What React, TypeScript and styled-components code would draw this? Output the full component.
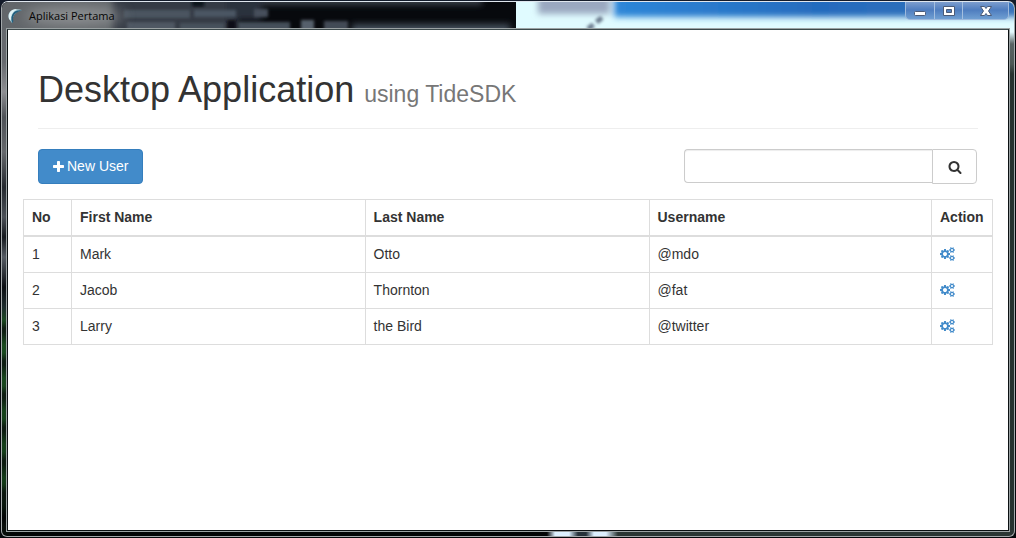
import React from "react";
import styled, { createGlobalStyle } from "styled-components";

const GlobalStyle = createGlobalStyle`
  *, *::before, *::after { box-sizing: border-box; }
  body {
    margin: 0;
    background: #05070b;
    color: #333;
    font: 14px/19px "Liberation Sans", Arial, sans-serif;
  }
`;

const Desktop = styled.div`
  display: flex;
  min-height: 100vh;
  padding: 1px;
  background: linear-gradient(#141c2b, #05070b 40px);
`;

const Frame = styled.div`
  position: relative;
  flex: 1;
  display: flex;
  flex-direction: column;
  padding: 0 5px 5px;
  border: 1px solid #a3a8aa;
  border-top-color: #dfe6ee;
  border-radius: 7px 7px 6px 6px;
  overflow: hidden;
  background:
    linear-gradient(to right,
      transparent 545px, #dcf0ff 553px 567px, #26323a 576px 584px,
      #dcf0ff 592px 604px, #2b3634 616px) bottom / 100% 6px no-repeat,
    linear-gradient(#e4fbff 0 30px, #596464 42px, #4c5855 62px, #26322f 72px) right / 8px 100% no-repeat,
    repeating-linear-gradient(transparent 0 8px, #0b120ecc 16px 20px, transparent 33px) left 310px / 8px 100% no-repeat,
    linear-gradient(#66696e 0 60px, #8d8e92 90px, #4e5257 115px, #65686c 150px,
      #25292f 185px, #4b5057 215px, #15191e 235px, #555b63 255px, #0b0e12 285px,
      #1d2b2d 305px, #1b4d20 320px, #123a17 480px, #020405 515px) left / 8px 100% no-repeat,
    #030506;
`;

const Backdrop = styled.svg`
  position: absolute;
  inset: 0 0 auto 0;
  width: 100%;
  height: 28px;
`;

const TitleBar = styled.header`
  position: relative;
  display: flex;
  justify-content: space-between;
  height: 27px;
`;

const Title = styled.div`
  display: flex;
  align-items: center;
  gap: 6px;
  color: #050505;
  font: 11px/16px "Open Sans", "Noto Sans", sans-serif;
`;

const Caption = styled.div`
  display: flex;
  height: 18px;
  border: 1px solid #9db9dc;
  border-top: 0;
  border-radius: 0 0 5px 5px;
  overflow: hidden;
  background: linear-gradient(#7c9dce, #4f7dbf 8px, #6f9fd2);
`;

const CaptionButton = styled.button<{ $wide?: boolean }>`
  display: grid;
  place-items: center;
  width: ${(p) => (p.$wide ? 46 : 28)}px;
  padding: 0;
  border: 0;
  background: none;
  & + & { border-left: 1px solid #a4bfdf; }
`;

const Client = styled.main`
  position: relative;
  flex: 1;
  padding: 40px 15px;
  border: 1px solid #0b1012;
  border-top-color: #3d4a4c;
  outline: 1px solid #9ba2a3;
  background: #fff;
`;

const Inset = styled.div`
  padding: 0 15px;
`;

const Heading = styled.h1`
  margin: 0 0 20px;
  padding-bottom: 14px;
  border-bottom: 1px solid #eee;
  font-size: 36px;
  font-weight: 400;
  line-height: 40px;
`;

const Sub = styled.small`
  color: #777;
  font-size: 23px;
`;

const Toolbar = styled.div`
  display: flex;
  justify-content: space-between;
  align-items: flex-start;
  margin-bottom: 15px;
`;

const NewButton = styled.button`
  display: flex;
  align-items: center;
  gap: 3px;
  height: 35px;
  padding: 0 14px;
  border: 1px solid #357ebd;
  border-radius: 4px;
  background: #428bca;
  color: #fff;
  font: inherit;
`;

const Search = styled.form`
  display: flex;
  align-items: flex-start;
  width: 293px;
  margin-right: 1px;
`;

const SearchInput = styled.input`
  flex: 1;
  min-width: 0;
  height: 34px;
  padding: 6px 12px;
  border: 1px solid #ccc;
  border-right: 0;
  border-radius: 4px 0 0 4px;
  box-shadow: inset 0 1px 1px #00000013;
  font: inherit;
`;

const SearchButton = styled.button`
  display: grid;
  place-items: center;
  width: 45px;
  height: 35px;
  padding: 0;
  border: 1px solid #ccc;
  border-radius: 0 4px 4px 0;
  background: #fff;
  color: #333;
`;

const Table = styled.table`
  width: 100%;
  table-layout: fixed;
  border-collapse: collapse;
`;

const Col = styled.col<{ $width?: string }>`
  width: ${(p) => p.$width ?? "auto"};
`;

const Th = styled.th`
  padding: 8px;
  border: 1px solid #ddd;
  border-bottom-width: 2px;
  text-align: left;
`;

const Td = styled.td`
  padding: 8px;
  border: 1px solid #ddd;
`;

const ActionLink = styled.a`
  display: flex;
  padding-bottom: 2px;
  color: #428bca;
`;

const PlusIcon = () => (
  <svg width="11" height="14" viewBox="192 0 1408 1792" fill="currentColor" aria-hidden="true">
    <path d="M1600 736v192q0 40-28 68t-68 28h-416v416q0 40-28 68t-68 28h-192q-40 0-68-28t-28-68v-416h-416q-40 0-68-28t-28-68v-192q0-40 28-68t68-28h416v-416q0-40 28-68t68-28h192q40 0 68 28t28 68v416h416q40 0 68 28t28 68z" />
  </svg>
);

const SearchIcon = () => (
  <svg width="14" height="14" viewBox="0 0 1792 1792" fill="currentColor" aria-hidden="true">
    <path d="M1216 832q0-185-131.5-316.5t-316.5-131.5-316.5 131.5-131.5 316.5 131.5 316.5 316.5 131.5 316.5-131.5 131.5-316.5zm512 832q0 52-38 90t-90 38q-54 0-90-38l-343-342q-179 124-399 124-143 0-273.5-55.5t-225-150-150-225-55.5-273.5 55.5-273.5 150-225 225-150 273.5-55.5 273.5 55.5 225 150 150 225 55.5 273.5q0 220-124 399l343 343q37 37 37 90z" />
  </svg>
);

const SMALL_GEAR =
  "v140q0 16-149 31-12 27-30 52 51 113 51 138 0 4-4 7-122 71-124 71-8 0-46-47t-52-68q-20 2-30 2t-30-2q-14 21-52 68t-46 47q-2 0-124-71-4-3-4-7 0-25 51-138-18-25-30-52-149-15-149-31v-140q0-16 149-31 13-29 30-52-51-113-51-138 0-4 4-7 4-2 35-20t59-34 30-16q8 0 46 46.500t52 67.500q20-2 30-2t30 2q51-71 92-112l6-2q4 0 124 70 4 3 4 7 0 25-51 138 17 23 30 52 149 15 149 31z";

const CogsIcon = () => (
  <svg width="15" height="14" viewBox="0 0 1920 1792" fill="currentColor" aria-hidden="true">
    <path
      fillRule="evenodd"
      d={
        "M896 896q0-106-75-181t-181-75-181 75-75 181 75 181 181 75 181-75 75-181zm768 512q0-52-38-90t-90-38-90 38-38 90q0 53 37.5 90.5t90.5 37.5 90.5-37.5 37.5-90.5zm0-1024q0-52-38-90t-90-38-90 38-38 90q0 53 37.5 90.5t90.5 37.5 90.5-37.5 37.5-90.5zm-384 421v185q0 10-7 19.5t-16 10.5l-155 24q-11 35-32 76 34 48 90 115 7 11 7 20 0 12-7 19-23 30-82.5 89.5t-78.5 59.5q-11 0-21-7l-115-90q-37 19-77 31-11 108-23 155-7 24-30 24h-186q-11 0-20-7.5t-10-17.5l-23-153q-34-10-75-31l-118 89q-7 7-20 7-11 0-21-8-144-133-144-160 0-9 7-19 10-14 41-53t47-61q-23-44-35-82l-152-24q-10-1-17-9.5t-7-19.5v-185q0-10 7-19.5t16-10.5l155-24q11-35 32-76-34-48-90-115-7-11-7-20 0-12 7-20 22-30 82-89t79-59q11 0 21 7l115 90q34-18 77-32 11-108 23-154 7-24 30-24h186q11 0 20 7.5t10 17.5l23 153q34 10 75 31l118-89q8-7 20-7 11 0 21 8 144 133 144 160 0 8-7 19-12 16-42 54t-45 60q23 48 34 82l152 23q10 2 17 10.5t7 19.5z" +
        "M1920 1338" + SMALL_GEAR +
        "M1920 314" + SMALL_GEAR
      }
    />
  </svg>
);

const AppLogo = () => (
  <svg width="16" height="16" viewBox="0 0 16 16" aria-hidden="true">
    <path d="M15 2Q8 0 4 3Q0 6 2 11L5 15Q6 14 6 12Q5 5 15 2Z" fill="#b4d8e2" />
    <path d="M15 2Q9 2 7 4Q3 8 5 15Q7 14 6 11Q6 6 11 4Z" fill="#24607f" />
    <path d="M10 1Q5 1 3 4T2 11L4 12Q3 5 10 1Z" fill="#e2f3f6" />
  </svg>
);

const TitleBackdrop = () => (
  <Backdrop viewBox="0 0 1012 28" preserveAspectRatio="none" aria-hidden="true">
    <defs>
      <filter id="soft" x="-10%" y="-50%" width="120%" height="200%">
        <feGaussianBlur stdDeviation="3" />
      </filter>
      <filter id="fine" x="-50%" y="-50%" width="200%" height="200%">
        <feGaussianBlur stdDeviation="1.500" />
      </filter>
      <filter id="glow" x="-20%" y="-100%" width="140%" height="300%">
        <feGaussianBlur stdDeviation="7" />
      </filter>
      <linearGradient id="sky">
        <stop offset="0" stopColor="#2d86d8" />
        <stop offset="0.5" stopColor="#246bbd" />
        <stop offset="1" stopColor="#3a73b8" />
      </linearGradient>
    </defs>
    <rect width="514" height="28" fill="#07090d" />
    <g filter="url(#soft)">
      <rect x="-20" y="-12" width="148" height="56" fill="#62666b" />
      <rect x="110" y="-12" width="125" height="56" fill="#343b45" />
      <rect x="225" y="-8" width="35" height="26" fill="#2b323c" />
      <rect x="260" y="-8" width="220" height="11" fill="#3a3f49" />
      <rect x="350" y="22" width="158" height="14" fill="#434d58" />
    </g>
    <g filter="url(#fine)">
      <rect x="122" y="8" width="66" height="8" fill="#4b5561" />
      <rect x="192" y="8" width="42" height="7" fill="#4c5763" />
      <rect x="252" y="7" width="14" height="8" fill="#46505c" />
      <rect x="125" y="20" width="48" height="9" fill="#4f5964" />
      <rect x="178" y="21" width="44" height="8" fill="#47515c" />
      <rect x="236" y="20" width="52" height="9" fill="#454f5a" />
      <rect x="299" y="18" width="13" height="11" fill="#56606c" />
      <rect x="322" y="19" width="24" height="10" fill="#424c57" />
      <rect x="190" y="-2" width="12" height="7" fill="#10141a" />
      <rect x="225" y="18" width="9" height="11" fill="#0c1015" />
    </g>
    <rect x="514" width="498" height="28" fill="#e0fbff" />
    <g filter="url(#soft)">
      <rect x="536" y="-8" width="72" height="20" fill="#9aa8c0" />
      <rect x="612" y="-8" width="420" height="23" fill="url(#sky)" />
    </g>
    <path d="M586 27L602 14" stroke="#6c7c8e" strokeWidth="5" strokeDasharray="7 4" filter="url(#fine)" />
    <ellipse cx="72" cy="14" rx="50" ry="9" fill="#a2a4a6" opacity="0.7" filter="url(#glow)" />
  </Backdrop>
);

const users = [
  { first: "Mark", last: "Otto", username: "@mdo" },
  { first: "Jacob", last: "Thornton", username: "@fat" },
  { first: "Larry", last: "the Bird", username: "@twitter" },
];

export default function App() {
  return (
    <Desktop>
      <GlobalStyle />
      <Frame>
        <TitleBackdrop />
        <TitleBar>
          <Title>
            <AppLogo />
            Aplikasi Pertama
          </Title>
          <Caption>
            <CaptionButton aria-label="Minimize">
              <svg width="14" height="12" viewBox="0 0 14 12">
                <rect x="1.500" y="6.500" width="11" height="4" rx="1" fill="#fff" stroke="#4b5b78" />
              </svg>
            </CaptionButton>
            <CaptionButton aria-label="Maximize">
              <svg width="14" height="12" viewBox="0 0 14 12">
                <path d="M1.500 1.500h11v9h-11zM4.500 4.500v3h5v-3z" fill="#fff" stroke="#4b5b78" fillRule="evenodd" />
              </svg>
            </CaptionButton>
            <CaptionButton aria-label="Close" $wide>
              <svg width="14" height="12" viewBox="0 0 14 12">
                <path d="M1.500 1.500h4L7 3.500l1.500-2h4L9.500 6l3 4.500h-4L7 8.500l-1.500 2h-4l3-4.500z" fill="#fff" stroke="#4b5b78" />
              </svg>
            </CaptionButton>
          </Caption>
        </TitleBar>
        <Client>
          <Inset>
            <Heading>
              Desktop Application <Sub>using TideSDK</Sub>
            </Heading>
            <Toolbar>
              <NewButton type="button">
                <PlusIcon />
                New User
              </NewButton>
              <Search onSubmit={(e) => e.preventDefault()}>
                <SearchInput type="text" aria-label="Search users" />
                <SearchButton type="submit" aria-label="Search">
                  <SearchIcon />
                </SearchButton>
              </Search>
            </Toolbar>
          </Inset>
          <Table>
            <colgroup>
              <Col $width="48px" />
              <Col $width="30.3%" />
              <Col $width="29.3%" />
              <Col />
              <Col $width="61px" />
            </colgroup>
            <thead>
              <tr>
                <Th>No</Th>
                <Th>First Name</Th>
                <Th>Last Name</Th>
                <Th>Username</Th>
                <Th>Action</Th>
              </tr>
            </thead>
            <tbody>
              {users.map((user, i) => (
                <tr key={user.username}>
                  <Td>{i + 1}</Td>
                  <Td>{user.first}</Td>
                  <Td>{user.last}</Td>
                  <Td>{user.username}</Td>
                  <Td>
                    <ActionLink href="#" aria-label={`Manage ${user.first}`}>
                      <CogsIcon />
                    </ActionLink>
                  </Td>
                </tr>
              ))}
            </tbody>
          </Table>
        </Client>
      </Frame>
    </Desktop>
  );
}
